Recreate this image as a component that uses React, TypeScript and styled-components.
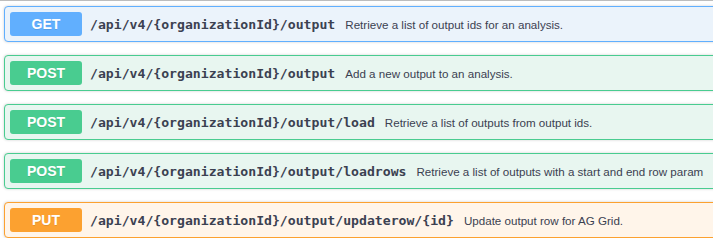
import styled, { createGlobalStyle } from 'styled-components';

const GlobalStyle = createGlobalStyle`
    html, body {
        margin: 0;
        padding: 0;
        background: #ffffff;
        overflow: hidden;
    }
`

type Method = 'get' | 'post' | 'put'

const colors: Record<Method, { main: string; bg: string }> = {
    get: { main: '#61affe', bg: '#ebf3fb' },
    post: { main: '#49cc90', bg: '#e8f6f0' },
    put: { main: '#fca130', bg: '#fff5ea' },
}

const Page = styled.div`
    width: 740px;
    border-top: 1px solid #bdbdbd;
    padding: 5px 0 0 4px;
    display: flex;
    flex-direction: column;
    gap: 13px;
`

const Block = styled.div<{ $method: Method }>`
    display: flex;
    align-items: center;
    gap: 8px;
    height: 34px;
    padding: 0 5px;
    border: 1px solid ${p => colors[p.$method].main};
    border-radius: 4px;
    background: ${p => colors[p.$method].bg};
    box-shadow: 0 0 3px rgba(0, 0, 0, 0.19);
`

const Badge = styled.span<{ $method: Method }>`
    width: 72px;
    height: 24px;
    flex-shrink: 0;
    display: flex;
    align-items: center;
    justify-content: center;
    border-radius: 3px;
    background: ${p => colors[p.$method].main};
    color: #ffffff;
    font-family: "Liberation Sans", Arial, sans-serif;
    font-weight: 700;
    font-size: 14px;
    text-shadow: 0 1px 0 rgba(0, 0, 0, 0.1);
`

const Path = styled.span`
    font-family: "DejaVu Sans Mono", "Liberation Mono", monospace;
    font-size: 13.15px;
    font-weight: 600;
    color: #3b4151;
    white-space: nowrap;
`

const Description = styled.span`
    margin-left: 2px;
    font-family: "Liberation Sans", Arial, sans-serif;
    font-size: 11.6px;
    color: #3b4151;
    white-space: nowrap;
`

const operations: { method: Method; path: string; description: string }[] = [
    { method: 'get', path: '/api/v4/{organizationId}/output', description: 'Retrieve a list of output ids for an analysis.' },
    { method: 'post', path: '/api/v4/{organizationId}/output', description: 'Add a new output to an analysis.' },
    { method: 'post', path: '/api/v4/{organizationId}/output/load', description: 'Retrieve a list of outputs from output ids.' },
    { method: 'post', path: '/api/v4/{organizationId}/output/loadrows', description: 'Retrieve a list of outputs with a start and end row param' },
    { method: 'put', path: '/api/v4/{organizationId}/output/updaterow/{id}', description: 'Update output row for AG Grid.' },
]

const App = () => {
    return (
        <>
            <GlobalStyle />
            <Page>
                {operations.map((op, i) => (
                    <Block key={i} $method={op.method}>
                        <Badge $method={op.method}>{op.method.toUpperCase()}</Badge>
                        <Path>{op.path}</Path>
                        <Description>{op.description}</Description>
                    </Block>
                ))}
            </Page>
        </>
    )
}

export default App
